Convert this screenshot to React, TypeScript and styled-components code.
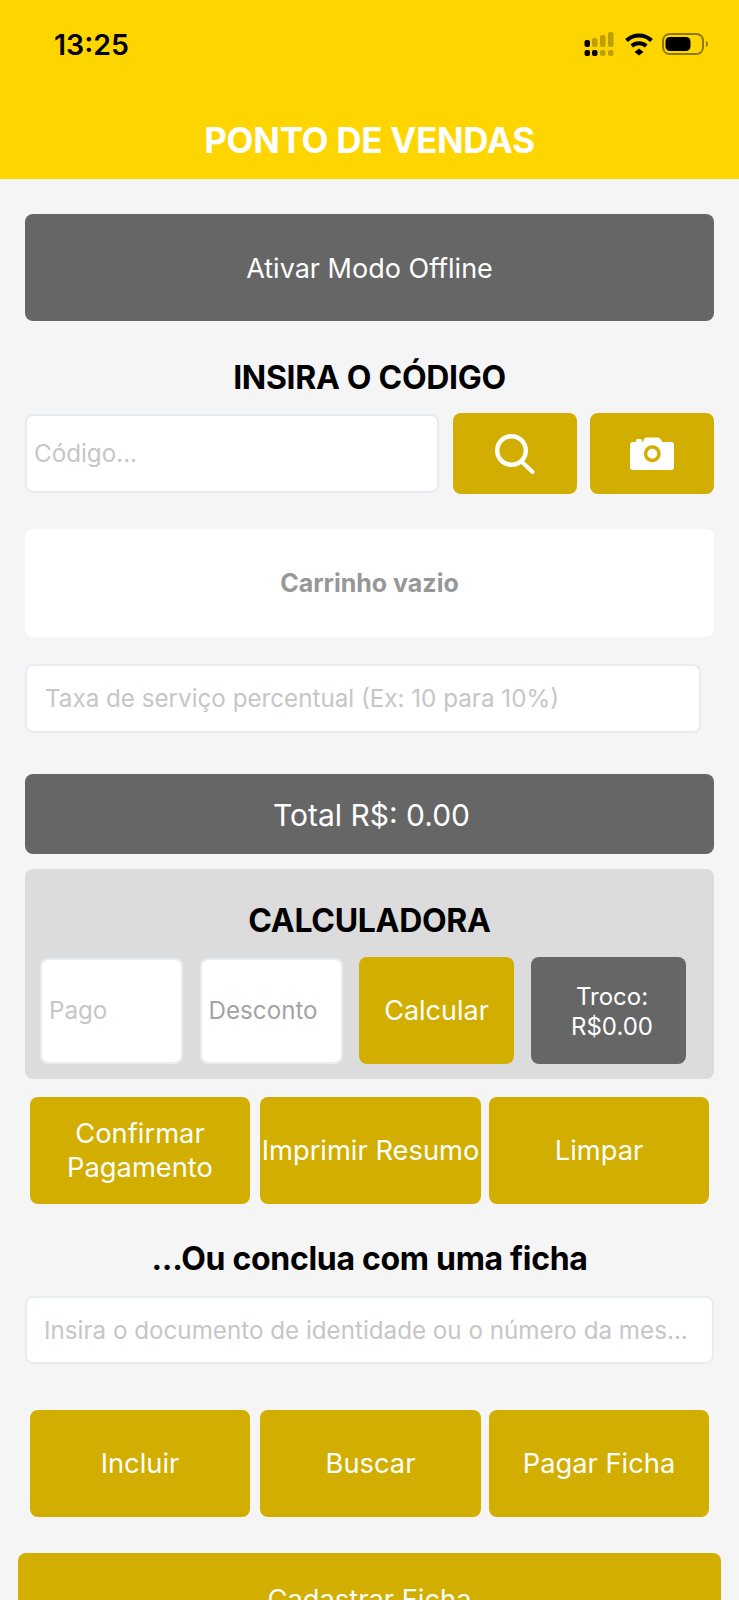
import styled, { createGlobalStyle } from "styled-components";

const GOLD = "#d1ae00";
const GREY = "#666666";

const GlobalStyle = createGlobalStyle`
  html, body {
    margin: 0;
    padding: 0;
    background: #f5f5f5;
  }
  * {
    box-sizing: border-box;
  }
  input::placeholder {
    color: #c6c6c8;
    opacity: 1;
  }
`;

const SignalIcon = () => (
  <svg width="32" height="24" viewBox="0 0 32 24">
    <g fill="#000">
      <rect x="0.500" y="8" width="5.500" height="7" rx="2" />
      <rect x="0.500" y="18" width="5.500" height="6" rx="2" />
      <rect x="8" y="18" width="5.500" height="6" rx="2" />
    </g>
    <g fill="#bd9f00">
      <rect x="8" y="6" width="5.500" height="9" rx="2" />
      <rect x="16" y="3" width="5.500" height="12" rx="2" />
      <rect x="24" y="0" width="5.500" height="15" rx="2" />
      <rect x="16" y="18" width="5.500" height="6" rx="2" />
      <rect x="24" y="18" width="5.500" height="6" rx="2" />
    </g>
  </svg>
);

const WifiIcon = () => (
  <svg width="30" height="24" viewBox="0 0 30 24">
    <path d="M15 16.500l4.500 3.500-4.500 3.500-4.500-3.500z" fill="#000" />
    <path d="M2.500 8.500C9.500 1.800 20.500 1.800 27.500 8.500" fill="none" stroke="#000" strokeWidth="4" />
    <path d="M7.800 14C12 10.300 18 10.300 22.200 14" fill="none" stroke="#000" strokeWidth="4" />
  </svg>
);

const BatteryIcon = () => (
  <svg width="47" height="24" viewBox="0 0 47 24">
    <rect x="1" y="2" width="40" height="20" rx="6.500" fill="none" stroke="#8f7800" strokeWidth="2" />
    <rect x="3.500" y="5" width="25" height="14" rx="4.500" fill="#000" />
    <path d="M44 9c2.600.6 2.600 5.400 0 6z" fill="#8f7800" />
  </svg>
);

const SearchIcon = () => (
  <svg width="40" height="40" viewBox="0 0 40 40">
    <circle cx="16.500" cy="16.500" r="14.300" fill="none" stroke="#fff" strokeWidth="4.400" />
    <path d="M27 28l10.500 10" fill="none" stroke="#fff" strokeWidth="4" strokeLinecap="round" />
  </svg>
);

const CameraIcon = () => (
  <svg width="44" height="33" viewBox="0 0 44 33">
    <path
      fillRule="evenodd"
      fill="#fff"
      d="M3 5h3V3.500A1.500 1.500 0 0 1 7.500 2h3A1.500 1.500 0 0 1 12 3.500V5h.5l2-3.500A2 2 0 0 1 16.200.5h12a2 2 0 0 1 1.700 1L32.500 5H41a3 3 0 0 1 3 3v22a3 3 0 0 1-3 3H3a3 3 0 0 1-3-3V8a3 3 0 0 1 3-3zM22.300 8.200a8.500 8.500 0 1 0 0 17 8.500 8.500 0 0 0 0-17zM22.300 11.700a5 5 0 1 1 0 10 5 5 0 0 1 0-10z"
    />
  </svg>
);

const App = () => {
  return (
    <Screen>
      <GlobalStyle />
      <Header>
        <StatusBar>
          <Clock>13:25</Clock>
          <StatusIcons>
            <SignalIcon />
            <WifiIcon />
            <BatteryIcon />
          </StatusIcons>
        </StatusBar>
        <HeaderTitle>PONTO DE VENDAS</HeaderTitle>
      </Header>
      <Content>
        <OfflineButton>Ativar Modo Offline</OfflineButton>
        <SectionTitle $top={37}>INSIRA O CÓDIGO</SectionTitle>
        <CodeRow>
          <CodeInput placeholder="Código..." />
          <IconButton>
            <SearchIcon />
          </IconButton>
          <IconButton>
            <CameraIcon />
          </IconButton>
        </CodeRow>
        <CartCard>Carrinho vazio</CartCard>
        <ServiceInput placeholder="Taxa de serviço percentual (Ex: 10 para 10%)" />
        <TotalBar>Total R$: 0.00</TotalBar>
        <CalculatorPanel>
          <CalculatorTitle>CALCULADORA</CalculatorTitle>
          <CalculatorRow>
            <SmallInput placeholder="Pago" />
            <DiscountInput placeholder="Desconto" />
            <CalcButton>Calcular</CalcButton>
            <ChangeBox>
              Troco:
              <br />
              R$0.00
            </ChangeBox>
          </CalculatorRow>
        </CalculatorPanel>
        <ActionRow $top={18}>
          <ActionButton>
            Confirmar
            <br />
            Pagamento
          </ActionButton>
          <ActionButton>Imprimir Resumo</ActionButton>
          <ActionButton>Limpar</ActionButton>
        </ActionRow>
        <SectionTitle $top={35}>...Ou conclua com uma ficha</SectionTitle>
        <TabInput placeholder="Insira o documento de identidade ou o número da mes..." />
        <ActionRow $top={46}>
          <ActionButton>Incluir</ActionButton>
          <ActionButton>Buscar</ActionButton>
          <ActionButton>Pagar Ficha</ActionButton>
        </ActionRow>
        <RegisterButton>Cadastrar Ficha</RegisterButton>
      </Content>
    </Screen>
  );
};

export default App;

const Screen = styled.div`
  width: 739px;
  height: 1600px;
  overflow: hidden;
  background: #f5f5f5;
  font-family: Inter, "Liberation Sans", sans-serif;
`;

const Header = styled.header`
  height: 179px;
  background: #ffd500;
  display: flex;
  flex-direction: column;
`;

const StatusBar = styled.div`
  height: 88px;
  padding: 0 30px 0 54px;
  display: flex;
  justify-content: space-between;
  align-items: center;
`;

const Clock = styled.div`
  font-size: 28.500px;
  font-weight: 600;
  color: #000;
`;

const StatusIcons = styled.div`
  display: flex;
  align-items: center;
  gap: 8px;
`;

const HeaderTitle = styled.h1`
  margin: 32px 0 0;
  font-size: 35px;
  line-height: 40px;
  font-weight: 700;
  color: #fff;
  text-align: center;
  letter-spacing: -0.3px;
`;

const Content = styled.main`
  padding: 35px 25px 0;
`;

const OfflineButton = styled.div`
  height: 107px;
  padding-top: 1px;
  border-radius: 8px;
  background: ${GREY};
  color: #fff;
  font-size: 27px;
  display: flex;
  align-items: center;
  justify-content: center;
`;

const SectionTitle = styled.h2<{ $top: number }>`
  margin: ${(props) => props.$top}px 0 0;
  font-size: 32px;
  line-height: 40px;
  font-weight: 700;
  color: #000;
  text-align: center;
  letter-spacing: -0.3px;
`;

const CodeRow = styled.div`
  margin-top: 15px;
  display: flex;
  align-items: center;
  justify-content: space-between;
`;

const BaseInput = styled.input`
  display: block;
  background: #fff;
  border: 2px solid #e6ecf4;
  border-radius: 8px;
  outline: none;
  font-family: inherit;
  font-size: 24.200px;
  color: #000;
`;

const CodeInput = styled(BaseInput)`
  width: 414px;
  height: 79px;
  padding: 0 7px;
`;

const IconButton = styled.div`
  width: 124px;
  height: 81px;
  border-radius: 8px;
  background: ${GOLD};
  display: flex;
  align-items: center;
  justify-content: center;
`;

const CartCard = styled.div`
  margin-top: 35px;
  height: 108px;
  border-radius: 8px;
  background: #fff;
  color: #979797;
  font-size: 25px;
  font-weight: 700;
  display: flex;
  align-items: center;
  justify-content: center;
`;

const ServiceInput = styled(BaseInput)`
  margin-top: 27px;
  width: 676px;
  height: 69px;
  padding: 0 18px;
`;

const TotalBar = styled.div`
  margin-top: 41px;
  height: 80px;
  border-radius: 8px;
  background: ${GREY};
  color: #fff;
  font-size: 30px;
  padding: 2px 0 0 4px;
  display: flex;
  align-items: center;
  justify-content: center;
`;

const CalculatorPanel = styled.section`
  margin-top: 15px;
  height: 210px;
  border-radius: 8px;
  background: #dcdcdc;
  padding: 16px 15px 0;
`;

const CalculatorTitle = styled.h2`
  margin: 0;
  font-size: 32px;
  line-height: 72px;
  font-weight: 700;
  color: #000;
  text-align: center;
  letter-spacing: -0.3px;
`;

const CalculatorRow = styled.div`
  display: flex;
  align-items: center;
  gap: 16.500px;
`;

const SmallInput = styled(BaseInput)`
  width: 143px;
  height: 106px;
  padding: 0 7px;
`;

const DiscountInput = styled(SmallInput)`
  &::placeholder {
    color: #a3a3a6;
  }
`;

const CalcButton = styled.div`
  width: 155px;
  height: 107px;
  border-radius: 8px;
  background: ${GOLD};
  color: #fff;
  font-size: 27px;
  display: flex;
  align-items: center;
  justify-content: center;
`;

const ChangeBox = styled(CalcButton)`
  background: ${GREY};
  font-size: 24px;
  line-height: 30px;
  text-align: center;
  padding: 2px 0 0 8px;
`;

const ActionRow = styled.div<{ $top: number }>`
  margin-top: ${(props) => props.$top}px;
  padding: 0 5px;
  display: flex;

  & > :nth-child(2) {
    width: 221px;
    margin: 0 8px 0 10px;
  }
`;

const ActionButton = styled.div`
  width: 220px;
  height: 107px;
  border-radius: 8px;
  background: ${GOLD};
  color: #fff;
  font-size: 27.300px;
  line-height: 34px;
  text-align: center;
  white-space: nowrap;
  display: flex;
  align-items: center;
  justify-content: center;
`;

const TabInput = styled(BaseInput)`
  margin-top: 17px;
  width: 100%;
  height: 68px;
  padding: 0 17px;
`;

const RegisterButton = styled.div`
  margin: 36px -7px 0;
  height: 107px;
  padding-bottom: 14px;
  border-radius: 8px;
  background: ${GOLD};
  color: #fff;
  font-size: 27.300px;
  display: flex;
  align-items: center;
  justify-content: center;
`;
